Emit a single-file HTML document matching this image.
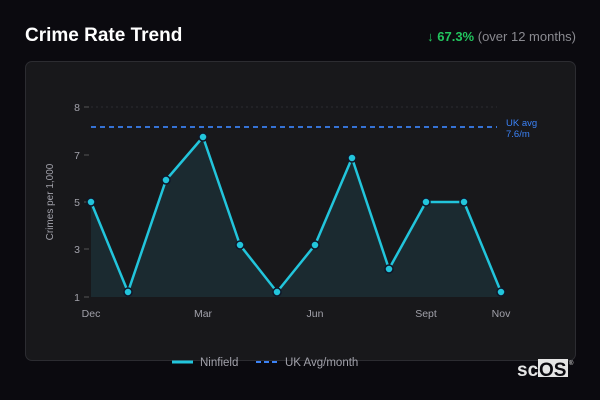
<!DOCTYPE html>
<html><head><style>
body{margin:0;width:600px;height:400px;background:#0b0a0f;font-family:"Liberation Sans",sans-serif;overflow:hidden;position:relative}
.t{position:absolute;left:25px;top:25px;color:#fff;font-weight:bold;font-size:19px}
.r{position:absolute;right:24px;top:29px;font-size:13px;color:#8a8a90}
.r b{color:#22c55e}
.card{position:absolute;left:25px;top:61px;width:549px;height:298px;border:1px solid #2c2c31;border-radius:7px;background:#18181b}
svg{position:absolute;left:0;top:0}
</style></head><body>
<div class="t">Crime Rate Trend</div>
<div class="r"><b>↓ 67.3%</b> (over 12 months)</div>
<div class="card"></div>
<svg width="600" height="400" font-family="Liberation Sans, sans-serif">
<g fill="#a1a1aa" font-size="10.5" text-anchor="end">
<text x="80" y="111">8</text><text x="80" y="159">7</text><text x="80" y="206">5</text><text x="80" y="253">3</text><text x="80" y="301">1</text>
</g>
<g stroke="#555" stroke-width="1"><line x1="84" y1="107" x2="89" y2="107"/><line x1="84" y1="155" x2="89" y2="155"/><line x1="84" y1="202" x2="89" y2="202"/><line x1="84" y1="249" x2="89" y2="249"/><line x1="84" y1="297" x2="89" y2="297"/></g>
<line x1="91" y1="107" x2="497" y2="107" stroke="#2c2c31" stroke-dasharray="2,3"/>
<text transform="translate(53,202) rotate(-90)" fill="#a1a1aa" font-size="10" text-anchor="middle">Crimes per 1,000</text>
<polygon fill="#1b2a30" points="91,297 91,202 128,292 166,180 203,137 240,245 277,292 315,245 352,158 389,269 426,202 464,202 501,292 501,297"/>
<line x1="91" y1="127" x2="497" y2="127" stroke="#3b82f6" stroke-width="2" stroke-dasharray="5,4" opacity=".85"/>
<text x="506" y="126" fill="#3b82f6" font-size="9.5">UK avg</text><text x="506" y="137" fill="#3b82f6" font-size="9.5">7.6/m</text>
<polyline fill="none" stroke="#22c5dc" stroke-width="2.5" stroke-linejoin="round" points="91,202 128,292 166,180 203,137 240,245 277,292 315,245 352,158 389,269 426,202 464,202 501,292"/>
<g fill="#22c5dc" stroke="#0f172a" stroke-width="1.5">
<circle cx="91" cy="202" r="4"/><circle cx="128" cy="292" r="4"/><circle cx="166" cy="180" r="4"/><circle cx="203" cy="137" r="4"/><circle cx="240" cy="245" r="4"/><circle cx="277" cy="292" r="4"/><circle cx="315" cy="245" r="4"/><circle cx="352" cy="158" r="4"/><circle cx="389" cy="269" r="4"/><circle cx="426" cy="202" r="4"/><circle cx="464" cy="202" r="4"/><circle cx="501" cy="292" r="4"/>
</g>
<g fill="#a1a1aa" font-size="10.5" text-anchor="middle">
<text x="91" y="317">Dec</text><text x="203" y="317">Mar</text><text x="315" y="317">Jun</text><text x="426" y="317">Sept</text><text x="501" y="317">Nov</text>
</g>
<line x1="172" y1="362" x2="193" y2="362" stroke="#22c5dc" stroke-width="3"/>
<text x="200" y="366" fill="#a1a1aa" font-size="11.5">Ninfield</text>
<line x1="256" y1="362" x2="278" y2="362" stroke="#3b82f6" stroke-width="2" stroke-dasharray="5,3"/>
<text x="285" y="366" fill="#a1a1aa" font-size="11.5">UK Avg/month</text>
<rect x="538" y="359" width="30" height="18" fill="#e5e5e5"/>
<text x="517" y="376" fill="#e5e5e5" font-size="19" font-weight="bold">sc</text>
<text x="539" y="376" fill="#0b0a0f" font-size="19" font-weight="bold">OS</text>
<text x="569" y="365" fill="#e5e5e5" font-size="6">®</text>
</svg>
</body></html>
